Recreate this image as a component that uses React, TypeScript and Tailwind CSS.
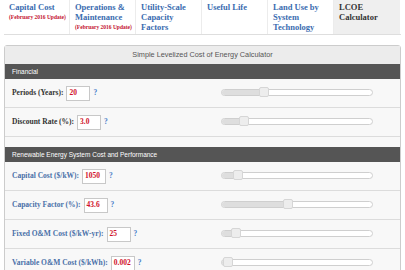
import React from "react";

interface TabNode {
  lines: string[];
  note?: string;
  active?: boolean;
}

const tabs: TabNode[] = [
  { lines: ["Capital Cost"], note: "(February 2016 Update)" },
  { lines: ["Operations &", "Maintenance"], note: "(February 2016 Update)" },
  { lines: ["Utility-Scale", "Capacity", "Factors"] },
  { lines: ["Useful Life"] },
  { lines: ["Land Use by", "System", "Technology"] },
  { lines: ["LCOE", "Calculator"], active: true },
];

interface RowNode {
  label: string;
  value: string;
  handle: number;
}

const financial: RowNode[] = [
  { label: "Periods (Years):", value: "20", handle: 37 },
  { label: "Discount Rate (%):", value: "3.0", handle: 17 },
];

const renewable: RowNode[] = [
  { label: "Capital Cost ($/kW):", value: "1050", handle: 11 },
  { label: "Capacity Factor (%):", value: "43.6", handle: 61 },
  { label: "Fixed O&M Cost ($/kW-yr):", value: "25", handle: 9 },
  { label: "Variable O&M Cost ($/kWh):", value: "0.002", handle: 1 },
];

const serif = "font-['Liberation_Serif',serif]";
const sans = "font-['Liberation_Sans',Arial,sans-serif]";

const Row: React.FC<{ row: RowNode; blue?: boolean }> = ({ row, blue }) => {
  return (
    <div className="flex items-center h-[29px] border-b border-[#dcdcdc]">
      <div className={`flex-1 flex items-center pl-[7px] ${serif} font-bold text-[7.5px]`}>
        <span className={blue ? "text-[#4a70a8]" : "text-[#333]"}>{row.label}</span>
        <span className="ml-[3px] w-[24px] h-[15px] border border-[#c8c8c8] bg-white flex items-center pl-[2px] text-[#d0112b]">
          {row.value}
        </span>
        <span className="ml-[3px] text-[#4a80c8]">?</span>
      </div>
      <div className="relative w-[152px] h-[7px] mr-[27px] mt-[-2px] rounded-full border border-[#cfcfcf] bg-white">
        <div
          className="absolute left-0 top-0 bottom-0 rounded-l-full bg-[#dedede]"
          style={{ width: row.handle + 4 }}
        />
        <div
          className="absolute top-[-3px] w-[10px] h-[10px] rounded-[2px] border border-[#d6d6d6] bg-[#ededed]"
          style={{ left: row.handle }}
        />
      </div>
    </div>
  );
};

const SectionBar: React.FC<{ title: string }> = ({ title }) => (
  <div className={`h-[15px] bg-[#555] flex items-center pl-[7px] text-white text-[6.5px] ${sans}`}>
    {title}
  </div>
);

const App: React.FC = () => {
  return (
    <div className="w-[405px] h-[270px] overflow-hidden bg-white">
      <div className="flex ml-[4px] w-[397px] h-[35px] border-b border-[#dedede]">
        {tabs.map((t, i) => (
          <div
            key={i}
            className={`w-[66px] shrink-0 px-[5px] pt-[2px] ${serif} font-bold ${
              t.active ? "bg-[#efefef] text-[#333]" : "text-[#3a6cb0] border-r border-[#ececec]"
            }`}
          >
            {t.lines.map((l) => (
              <div key={l} className="text-[8.5px] leading-[10px] whitespace-nowrap">
                {l}
              </div>
            ))}
            {t.note && (
              <div className="text-[5.5px] leading-[10px] text-[#c4122f] whitespace-nowrap">
                {t.note}
              </div>
            )}
          </div>
        ))}
      </div>

      <div className="mt-[10px] mx-[4px] border border-[#cccccc] rounded-t-[3px] bg-[#f8f8f8]">
        <div
          className={`h-[18px] bg-[#ececec] flex items-center justify-center text-[7.3px] text-[#555] ${sans}`}
        >
          Simple Levelized Cost of Energy Calculator
        </div>
        <SectionBar title="Financial" />
        {financial.map((r) => (
          <Row key={r.label} row={r} />
        ))}
        <div className="h-[10px]" />
        <SectionBar title="Renewable Energy System Cost and Performance" />
        {renewable.map((r) => (
          <Row key={r.label} row={r} blue />
        ))}
      </div>
    </div>
  );
};

export default App;
